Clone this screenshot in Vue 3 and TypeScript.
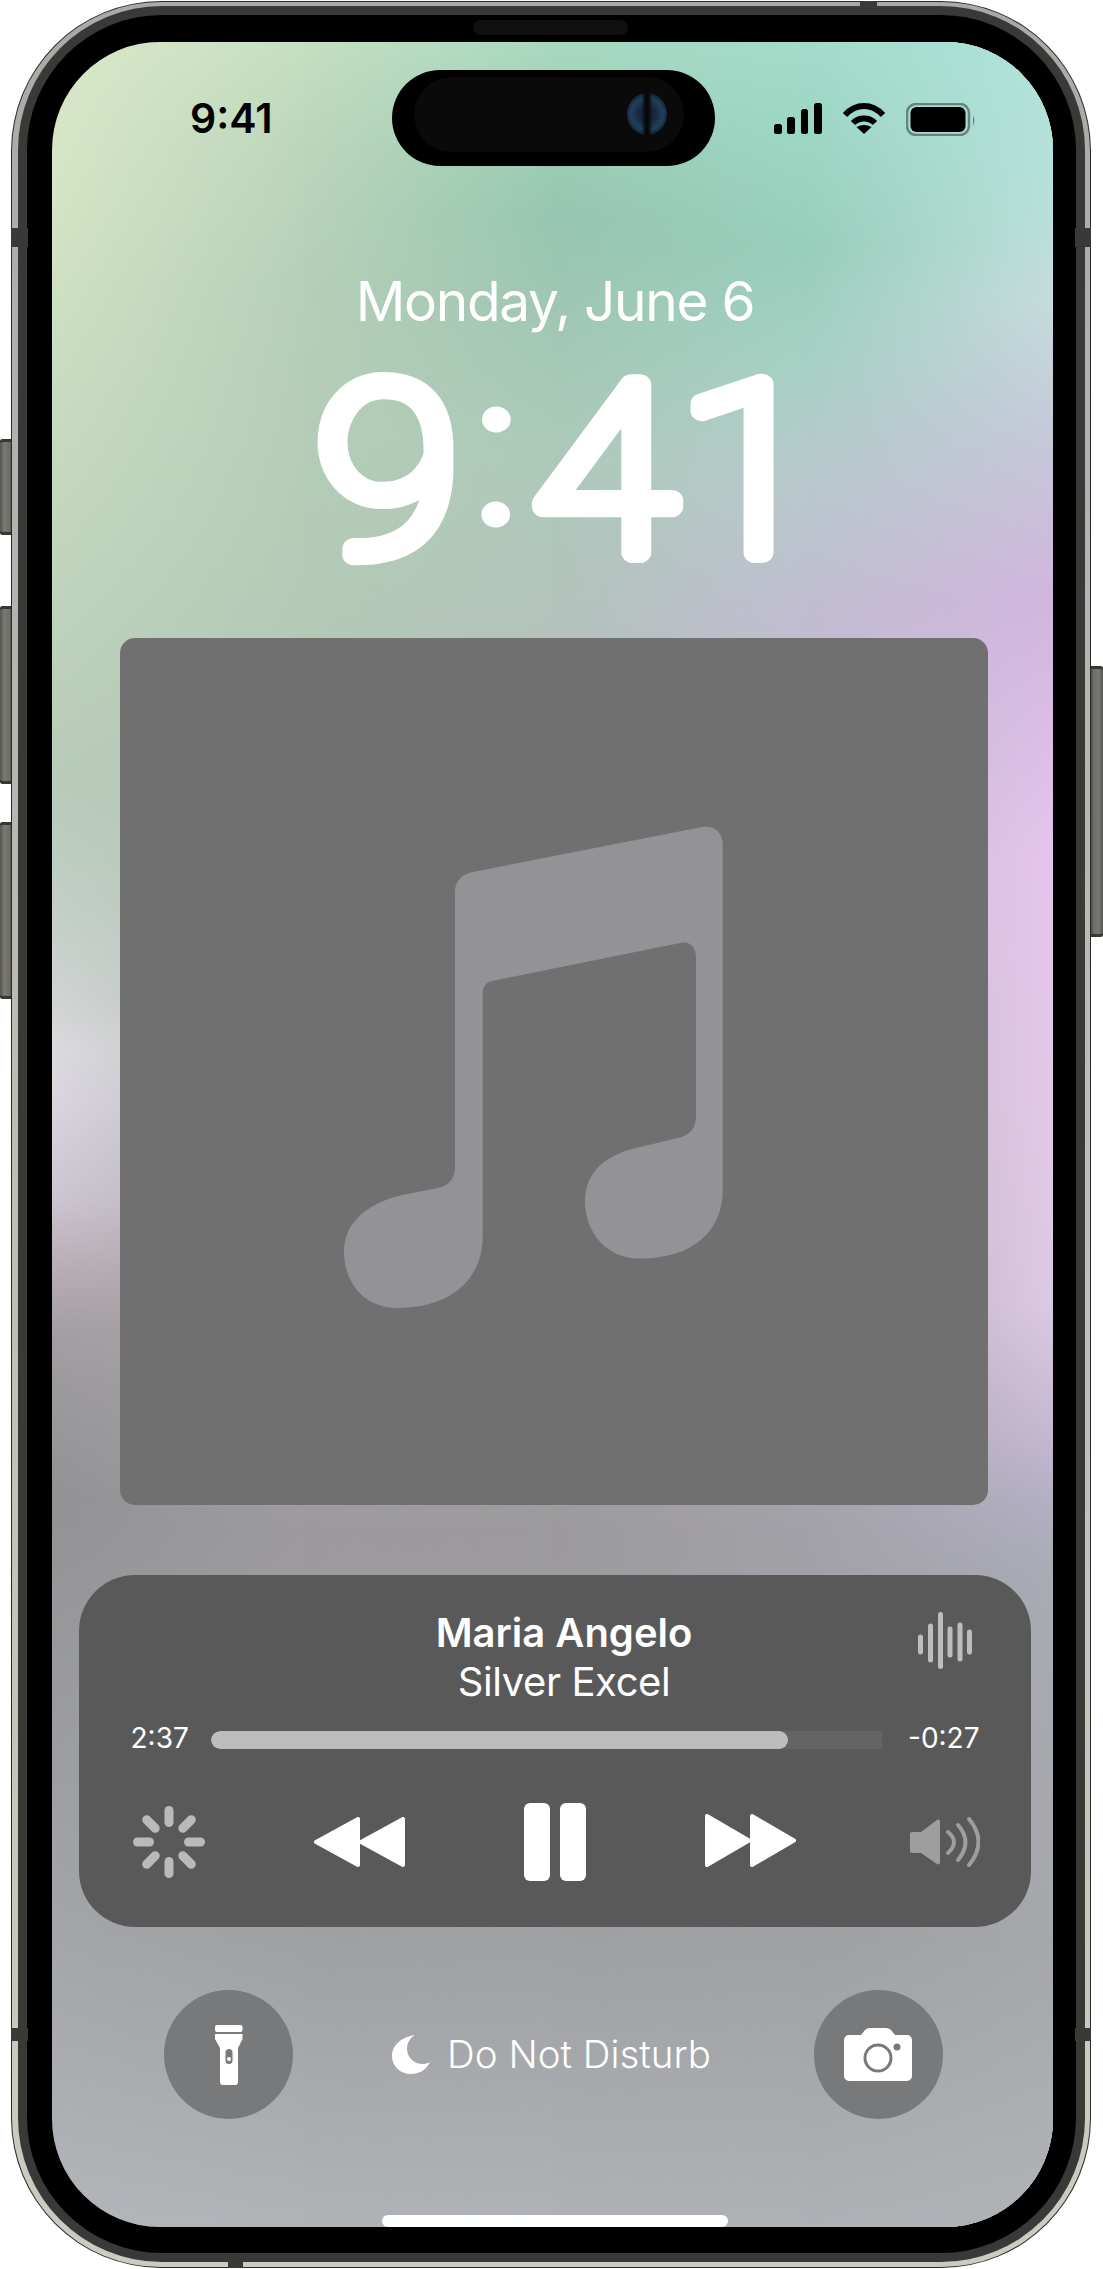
<template>
  <div class="page">
    <div class="side-btn btn-action"></div>
    <div class="side-btn btn-up"></div>
    <div class="side-btn btn-down"></div>
    <div class="side-btn btn-power"></div>

    <div class="frame">
      <div class="band">
        <div class="rim">
          <div class="bezel">
            <div class="speaker"></div>
            <div class="screen">
              <div class="wall">
                <div class="wall-col col-a"></div>
                <div class="wall-col col-b"></div>
                <div class="wall-col col-c"></div>
                <div class="wall-col col-d"></div>
                <div class="wall-col col-e"></div>
              </div>

              <div class="island">
                <div class="island-inner"></div>
                <div class="lens"></div>
              </div>

              <!-- status bar -->
              <div class="status">
                <span class="status-time">9:41</span>
                <div class="status-icons">
                  <svg width="48" height="31" viewBox="0 0 48 31">
                    <rect x="0" y="21" width="8" height="10" rx="2.5" />
                    <rect x="13" y="14" width="8" height="17" rx="2.5" />
                    <rect x="27" y="6" width="7" height="25" rx="2.5" />
                    <rect x="40" y="0" width="8" height="31" rx="2.5" />
                  </svg>
                  <svg width="44" height="31" viewBox="0 0 44 31">
                    <path class="wifi-arc" d="M3 12 C8.5 6 15 3 22 3 C29 3 35.5 6 41 12" />
                    <path class="wifi-arc" d="M11 20 C14 17 18 15.5 22 15.5 C26 15.5 30 17 33 20" />
                    <path d="M22 31 L14.5 24 Q22 20 29.5 24 Z" />
                  </svg>
                  <svg width="70" height="33" viewBox="0 0 70 33">
                    <rect class="batt-shell" x="1" y="1" width="62" height="31" rx="9" />
                    <rect x="4.5" y="4" width="55" height="25" rx="6" />
                    <path class="batt-cap" d="M67 13 Q70 16.5 67 23 Z" />
                  </svg>
                </div>
              </div>

              <div class="date">Monday, June 6</div>
              <svg class="clock" width="560" height="290" viewBox="0 0 560 290">
                <text transform="translate(51 222.5) scale(1.1 1)"><tspan>9</tspan><tspan class="colon" dx="17" dy="-33.5">:</tspan><tspan dx="15" dy="33.5">4</tspan><tspan dx="3">1</tspan></text>
              </svg>

              <!-- artwork -->
              <div class="album">
                <svg class="note" width="379" height="482" viewBox="344 826 379 482">
                  <path
                    d="M455 892 C455 881 462 874 473 872 L702 827 C714 825 722.7 832 722.7 844 L722.7 1190 C722.7 1232 692 1258.6 640 1258.6 C606 1258.6 585 1232 585 1201 C585 1172 606 1155 636 1148 L678 1138 C690 1135 696 1128 696 1116 L696 958 C696 947 690 941 680 943 L492 981 C485 983 482.7 987 482.7 995 L482.7 1236 C482.7 1280 450 1308 397 1308 C364 1308 344 1282 344 1252 C344 1222 368 1203 402 1195 L438 1188 C450 1185 455 1178 455 1166 Z"
                  />
                </svg>
              </div>

              <!-- now playing -->
              <div class="player">
                <div class="track-head">
                  <div class="track">
                    <div class="track-title">Maria Angelo</div>
                    <div class="track-sub">Silver Excel</div>
                  </div>
                  <svg class="wave" width="54" height="57" viewBox="0 0 54 57">
                    <line x1="2.5" y1="25" x2="2.5" y2="40" />
                    <line x1="12.5" y1="14" x2="12.5" y2="48" />
                    <line x1="22.5" y1="2.5" x2="22.5" y2="54.5" />
                    <line x1="32" y1="17" x2="32" y2="43" />
                    <line x1="42" y1="13" x2="42" y2="47" />
                    <line x1="51.5" y1="20" x2="51.5" y2="40" />
                  </svg>
                </div>

                <div class="progress-row">
                  <span class="time time-left">2:37</span>
                  <div class="bar">
                    <div class="bar-fill" :style="{ width: progress + '%' }"></div>
                  </div>
                  <span class="time time-right">-0:27</span>
                </div>

                <div class="controls">
                  <svg class="spinner" width="72" height="72" viewBox="-36 -36 72 72">
                    <line
                      v-for="a in spokes"
                      :key="a"
                      x1="0"
                      y1="-19.5"
                      x2="0"
                      y2="-31.5"
                      :transform="`rotate(${a})`"
                    />
                  </svg>
                  <div class="transport">
                    <svg class="skip" width="91" height="50" viewBox="0 0 91 50">
                      <path d="M2 25 L44 2 V48 Z" />
                      <path d="M47 25 L89 2 V48 Z" />
                    </svg>
                    <div class="pause">
                      <span></span>
                      <span></span>
                    </div>
                    <svg class="skip skip-next" width="91" height="53" viewBox="0 0 91 53">
                      <path d="M2 2 L44 26.5 L2 51 Z" />
                      <path d="M47 2 L89 26.5 L47 51 Z" />
                    </svg>
                  </div>
                  <svg class="volume" width="70" height="50" viewBox="0 0 70 50">
                    <path class="cone" d="M2 15 H11 L27 3 C29 2 30 3 30 5 V45 C30 47 29 48 27 47 L11 36 H2 C0.7 36 0 35 0 34 V17 C0 16 0.7 15 2 15 Z" />
                    <path d="M38 15 Q50 25 38 36" />
                    <path d="M48 8 Q63 25 48 43" />
                    <path d="M59 2 Q78 25 59 48" />
                  </svg>
                </div>
              </div>

              <!-- lock screen actions -->
              <div class="actions">
                <div class="round-btn">
                  <svg width="28" height="60" viewBox="0 0 28 60">
                    <rect x="0" y="0" width="27.5" height="7" rx="2" />
                    <path d="M0 9 H27.5 V14 L23 23 V57 A3 3 0 0 1 20 60 H8 A3 3 0 0 1 5 57 V23 L0 14 Z" />
                    <rect class="hole" x="10.5" y="24" width="7" height="15" rx="3.5" />
                    <circle cx="14" cy="34" r="2" />
                  </svg>
                </div>
                <div class="dnd">
                  <svg width="38" height="39" viewBox="0 0 38 39">
                    <path d="M23 0 C10 2 0 10 0 21 C0 31 8 39 19 39 C28 39 35 34 38 27 C36 28.5 33 29 30 29 C20 29 15 20 15 14 C15 8 18 3 23 0 Z" />
                  </svg>
                  <span>Do Not Disturb</span>
                </div>
                <div class="round-btn">
                  <svg width="68" height="53" viewBox="0 0 68 53">
                    <path d="M5 7 H17 L21 2 Q23 0 26 0 H42 Q45 0 47 2 L51 7 H63 A5 5 0 0 1 68 12 V48 A5 5 0 0 1 63 53 H5 A5 5 0 0 1 0 48 V12 A5 5 0 0 1 5 7 Z" />
                    <circle class="cam-ring" cx="34" cy="30" r="13" />
                    <circle class="hole" cx="53" cy="19" r="3.5" />
                  </svg>
                </div>
              </div>

              <div class="home-bar"></div>
            </div>
          </div>
        </div>
      </div>
      <i class="antenna ant-top"></i>
      <i class="antenna ant-bottom"></i>
      <i class="antenna ant-l1"></i>
      <i class="antenna ant-l2"></i>
      <i class="antenna ant-r1"></i>
      <i class="antenna ant-r2"></i>
    </div>
  </div>
</template>

<script setup lang="ts">
const progress = 86
const spokes = [0, 45, 90, 135, 180, 225, 270, 315]
</script>

<style>
html,
body {
  margin: 0;
  background: #fff;
}
</style>

<style scoped>
.page {
  position: relative;
  width: 1103px;
  height: 2269px;
  overflow: hidden;
  padding: 1px 12px 1px 11px;
  box-sizing: border-box;
  background: #fff;
  font-family: "Inter", "Liberation Sans", sans-serif;
  color: #fff;
}

/* hardware */
.side-btn {
  position: absolute;
  left: 0;
  width: 12px;
  border-radius: 3px 0 0 3px;
  background: linear-gradient(90deg, #55544f, #7a7974 35%, #6d6c67 80%, #4a4946);
  box-shadow: inset 0 5px 0 -2px #383734, inset 0 -5px 0 -2px #383734;
}
.btn-action {
  top: 439px;
  height: 96px;
}
.btn-up {
  top: 606px;
  height: 178px;
}
.btn-down {
  top: 822px;
  height: 177px;
}
.btn-power {
  left: auto;
  right: 0;
  top: 666px;
  height: 271px;
  border-radius: 0 3px 3px 0;
  background: linear-gradient(270deg, #55544f, #7a7974 35%, #6d6c67 80%, #4a4946);
}

.frame {
  position: relative;
  height: 100%;
  box-sizing: border-box;
  padding: 1px;
  border-radius: 150px;
  background: #2c2b29;
}
.band {
  height: 100%;
  box-sizing: border-box;
  padding: 4px 5px 5px 6px;
  border-radius: 149px;
  background: linear-gradient(180deg, #a9a9a7, #bdbdb6 50%, #cbcbc1);
}
.rim {
  height: 100%;
  box-sizing: border-box;
  padding: 9px;
  border-radius: 144px;
  background: #3a3937;
}
.bezel {
  position: relative;
  height: 100%;
  box-sizing: border-box;
  padding: 27px 23px 26px 25px;
  border-radius: 135px;
  background: #000;
}
.speaker {
  position: absolute;
  left: 446px;
  top: 5px;
  width: 155px;
  height: 15px;
  border-radius: 8px;
  background: #101010;
}
.antenna {
  position: absolute;
  background: #3a3937;
}
.ant-top {
  left: 849px;
  top: 0;
  width: 17px;
  height: 14px;
}
.ant-bottom {
  left: 217px;
  bottom: 0;
  width: 15px;
  height: 15px;
}
.ant-l1,
.ant-l2 {
  left: 0;
  width: 17px;
}
.ant-r1,
.ant-r2 {
  right: 0;
  width: 16px;
}
.ant-l1,
.ant-r1 {
  top: 227px;
  height: 19px;
}
.ant-l2,
.ant-r2 {
  top: 2027px;
  height: 13px;
}

/* screen */
.screen {
  position: relative;
  height: 100%;
  overflow: hidden;
  display: flex;
  flex-direction: column;
  border-radius: 108px;
}
.wall,
.wall-col {
  position: absolute;
  inset: 0;
}
.col-a {
  background: linear-gradient(180deg, #dce8ca 0, #d5e4c5 160px, #c8dcc0 360px, #bdd2bb 600px, #b8cbba 740px, #c2cfc6 860px, #d1d4d3 960px, #dcdadf 1008px, #dbd5df 1058px, #cdc5d0 1158px, #b9adb6 1228px, #a49fa4 1288px, #9b999c 1358px, #929395 1458px, #a4a6a9 1900px, #b3b6ba 2185px);
}
.col-b {
  background: linear-gradient(180deg, #c5dfc0 0, #bcd6bb 103px, #b5cfb8 247px, #b5cdb7 392px, #b3c9b6 595px, #b5bcb8 1000px, #a8a4a8 1300px, #9d9a9e 1490px, #9fa1a3 1900px, #b0b3b7 2185px);
  -webkit-mask-image: linear-gradient(90deg, transparent 0, #000 25%);
  mask-image: linear-gradient(90deg, transparent 0, #000 25%);
}
.col-c {
  background: linear-gradient(180deg, #a8d8c0 0, #9ccdb5 103px, #97c6b1 175px, #9ec6b3 247px, #abcab9 392px, #b3c4bc 566px, #b8b6bc 1000px, #a8a4aa 1300px, #9c9a9d 1490px, #9fa1a4 1900px, #afb2b6 2185px);
  -webkit-mask-image: linear-gradient(90deg, transparent 25%, #000 50%);
  mask-image: linear-gradient(90deg, transparent 25%, #000 50%);
}
.col-d {
  background: linear-gradient(180deg, #a2dbca 0, #9cd5c3 103px, #97cebb 204px, #a6d0c4 320px, #b8c9cc 435px, #c0bdd0 566px, #c4b8cc 900px, #b0a8b4 1300px, #a3a1a8 1490px, #9fa1a4 1900px, #aeb1b5 2185px);
  -webkit-mask-image: linear-gradient(90deg, transparent 50%, #000 75%);
  mask-image: linear-gradient(90deg, transparent 50%, #000 75%);
}
.col-e {
  background: linear-gradient(180deg, #b0e3db 0, #b7e0d9 160px, #c5dbdc 260px, #c6c6d8 410px, #d1b5df 560px, #e5c4ec 810px, #e3c8e8 1060px, #dcc9e3 1260px, #c3b7cf 1400px, #b2afc3 1460px, #a9abb5 1530px, #a5a7aa 1900px, #b0b3b7 2185px);
  -webkit-mask-image: linear-gradient(90deg, transparent 75%, #000 100%);
  mask-image: linear-gradient(90deg, transparent 75%, #000 100%);
}

.island {
  position: absolute;
  left: 340px;
  top: 28px;
  width: 323px;
  height: 96px;
  border-radius: 48px;
  background: #000;
}
.island-inner {
  position: absolute;
  left: 22px;
  top: 7px;
  width: 270px;
  height: 75px;
  border-radius: 38px;
  background: #0a0a0a;
}
.lens {
  position: absolute;
  left: 235px;
  top: 23px;
  width: 40px;
  height: 42px;
  border-radius: 50%;
  background:
    linear-gradient(90deg, transparent 36%, #05070a 47%, #05070a 53%, transparent 64%),
    radial-gradient(circle, #16263a 25%, #223f5c 55%, #0d1520 82%, #0a0c10 100%);
}

.status {
  position: relative;
  display: flex;
  align-items: center;
  justify-content: space-between;
  height: 50px;
  margin-top: 51px;
  padding: 0 77px 0 138px;
  color: #000;
}
.status-time {
  font-size: 41px;
  font-weight: 600;
  line-height: 50px;
}
.status-icons {
  display: flex;
  align-items: flex-start;
  gap: 20px;
  margin-top: 3px;
}
.wifi-arc {
  fill: none;
  stroke: #000;
  stroke-width: 6;
}
.batt-shell {
  fill: none;
  stroke: #000;
  stroke-opacity: 0.4;
  stroke-width: 2.5;
}
.batt-cap {
  fill-opacity: 0.4;
}

.date {
  position: relative;
  margin-top: 128px;
  padding-left: 5px;
  text-align: center;
  font-size: 55px;
  line-height: 60px;
  letter-spacing: -1.3px;
}
.clock {
  position: relative;
  display: block;
  margin: -1px 0 0 213px;
}
.clock text {
  fill: #fff;
  stroke: #fff;
  stroke-width: 21px;
  stroke-linejoin: round;
  stroke-linecap: round;
  font-family: "Roboto", "Inter", sans-serif;
  font-size: 236px;
  font-weight: 100;
}
.clock .colon {
  stroke-width: 15px;
  font-size: 203px;
}

.album {
  position: relative;
  display: flex;
  align-items: center;
  justify-content: center;
  box-sizing: border-box;
  width: 867.5px;
  height: 867.5px;
  margin: 17.5px 0 0 68px;
  padding: 0 40.5px 8.5px 0;
  border-radius: 15px;
  background: #707070;
}
.note {
  fill: #939297;
}

.player {
  position: relative;
  box-sizing: border-box;
  height: 352px;
  margin: 70px 22px 0 27px;
  padding-top: 33px;
  border-radius: 56px;
  background: #59595a;
}
.track-head {
  display: flex;
  align-items: flex-start;
  padding: 0 59px 0 131px;
}
.track {
  flex: 1;
  text-align: center;
  font-size: 40px;
  line-height: 49px;
}
.track-title {
  font-weight: 560;
}
.track-sub {
  letter-spacing: -0.4px;
}
.wave {
  margin-top: 4px;
  stroke: #bdbdbd;
  stroke-width: 5;
  stroke-linecap: round;
}

.progress-row {
  display: flex;
  align-items: center;
  height: 30px;
  margin-top: 19px;
  padding: 0 54px 0 51.5px;
}
.time {
  margin-bottom: 4px;
  font-size: 28px;
  line-height: 30px;
}
.time-left {
  width: 56px;
  margin-right: 24.5px;
}
.time-right {
  width: 69px;
  margin-left: 26px;
  text-align: right;
}
.bar {
  flex: 1;
  height: 18px;
  overflow: hidden;
  border-radius: 9px 2px 2px 9px;
  background: #636464;
}
.bar-fill {
  height: 100%;
  border-radius: 9px;
  background: #bdbdbd;
}

.controls {
  display: flex;
  align-items: center;
  justify-content: space-between;
  height: 78px;
  margin-top: 48px;
  padding: 0 51px 0 54px;
}
.spinner {
  stroke: #bababa;
  stroke-width: 9;
  stroke-linecap: round;
}
.transport {
  display: flex;
  align-items: center;
  gap: 119px;
  margin-left: -5px;
}
.skip {
  fill: #fff;
  stroke: #fff;
  stroke-width: 4;
  stroke-linejoin: round;
}
.skip-next {
  margin-top: -3px;
}
.pause {
  display: flex;
  gap: 10px;
}
.pause span {
  width: 26px;
  height: 78px;
  border-radius: 6px;
  background: #fff;
}
.volume {
  fill: none;
  stroke: #9d9e9e;
  stroke-width: 4;
  stroke-linecap: round;
}
.cone {
  fill: #9d9e9e;
  stroke: none;
}

.actions {
  position: relative;
  display: flex;
  align-items: center;
  justify-content: space-between;
  margin-top: 63px;
  padding: 0 110px 0 112px;
}
.round-btn {
  display: flex;
  align-items: center;
  justify-content: center;
  width: 129px;
  height: 129px;
  border-radius: 50%;
  background: #78797b;
}
.round-btn svg {
  fill: #fff;
}
.hole {
  fill: #78797b;
}
.cam-ring {
  fill: none;
  stroke: #78797b;
  stroke-width: 3;
}
.dnd {
  display: flex;
  align-items: center;
  gap: 17px;
  margin-left: -4px;
  font-size: 38.5px;
  font-weight: 300;
  line-height: 40px;
}
.dnd span {
  margin-bottom: 2px;
}
.dnd svg {
  fill: #fff;
}

.home-bar {
  position: relative;
  flex: none;
  align-self: center;
  width: 346px;
  height: 12px;
  margin: 96px 0 0 5px;
  border-radius: 6px;
  background: #fff;
}
</style>
